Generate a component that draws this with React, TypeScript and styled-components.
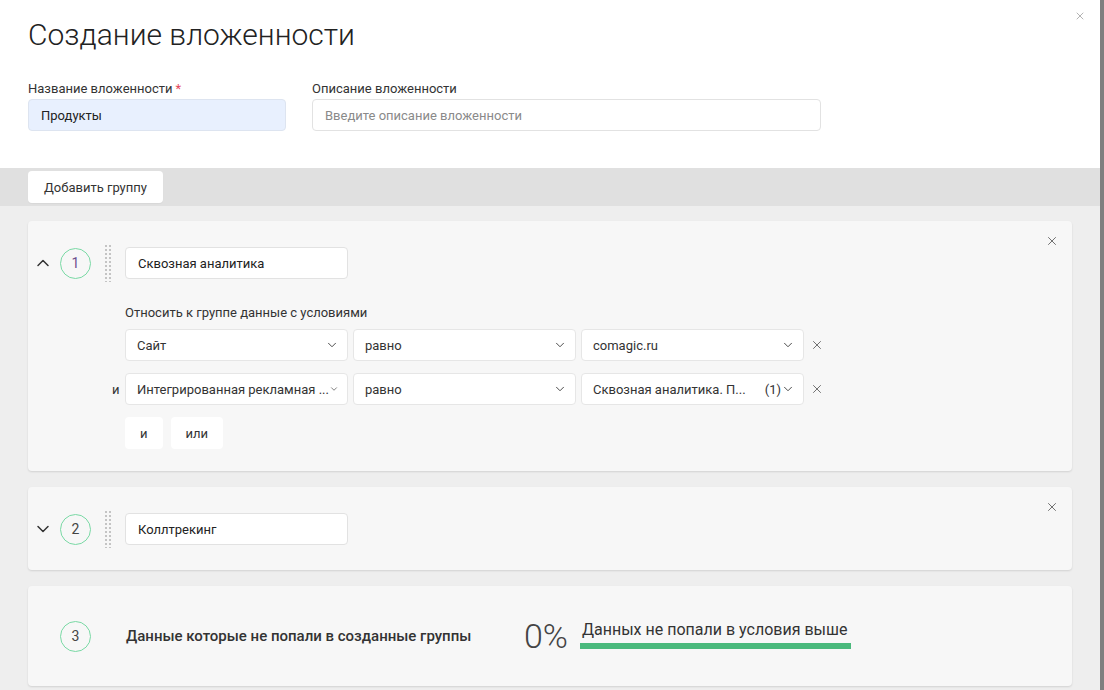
import React from 'react';
import styled, { createGlobalStyle } from 'styled-components';
import { ChevronDown, ChevronUp, X } from 'lucide-react';

const GlobalStyle = createGlobalStyle`
  html, body {
    margin: 0;
    padding: 0;
    background: #7f7f7f;
    font-family: Roboto, "Noto Sans", sans-serif;
    color: #333;
  }
  * { box-sizing: border-box; }
`;

const Modal = styled.div`
  width: 1100px;
  height: 690px;
  background: #eeeeee;
  overflow: hidden;
  display: flex;
  flex-direction: column;
`;

const Header = styled.div`
  position: relative;
  background: #fff;
  padding: 17px 28px 37px;
`;

const Title = styled.h1`
  margin: 0 0 28px;
  font-size: 30px;
  font-weight: 300;
  line-height: 36px;
  color: #222;
`;

const CloseModal = styled.button`
  position: absolute;
  top: 10px;
  right: 14px;
  border: 0;
  background: none;
  padding: 0;
  color: #9a9a9a;
  display: flex;
`;

const Fields = styled.div`
  display: flex;
  gap: 26px;
`;

const Field = styled.label<{ $width: number }>`
  display: flex;
  flex-direction: column;
  width: ${(p) => p.$width}px;
  font-size: 13px;
  color: #333;
  gap: 3px;
`;

const Required = styled.span`
  color: #e4485a;
  margin-left: 3px;
`;

const TextInput = styled.input<{ $filled?: boolean }>`
  height: 32px;
  padding: 0 12px;
  border: 1px solid ${(p) => (p.$filled ? '#dde4f0' : '#e2e2e2')};
  background: ${(p) => (p.$filled ? '#e8f0fe' : '#fff')};
  border-radius: 4px;
  font-family: inherit;
  font-size: 13px;
  color: #222;
  outline: none;
  &::placeholder { color: #8a8a8a; }
`;

const Toolbar = styled.div`
  background: #e0e0e0;
  height: 38px;
  padding: 3px 28px;
`;

const Button = styled.button`
  height: 32px;
  padding: 0 16px;
  border: 0;
  border-radius: 4px;
  background: #fff;
  font-family: inherit;
  font-size: 13px;
  color: #333;
  box-shadow: 0 1px 1px rgba(0, 0, 0, 0.04);
`;

const Content = styled.div`
  padding: 15px 28px;
  display: flex;
  flex-direction: column;
  gap: 16px;
`;

const Card = styled.div<{ $pad: string }>`
  position: relative;
  background: #f7f7f7;
  border-radius: 4px;
  box-shadow: 0 1px 2px rgba(0, 0, 0, 0.12);
  padding: ${(p) => p.$pad};
`;

const CardClose = styled.button`
  position: absolute;
  top: 13px;
  right: 13px;
  border: 0;
  background: none;
  padding: 0;
  color: #666;
  display: flex;
`;

const GroupRow = styled.div`
  display: flex;
  align-items: center;
  height: 38px;
`;

const Toggle = styled.span`
  width: 30px;
  margin-right: 2px;
  display: flex;
  justify-content: center;
  color: #333;
`;

const Num = styled.span<{ $color?: string }>`
  width: 31px;
  height: 31px;
  border-radius: 50%;
  border: 1px solid #7ad9a5;
  display: flex;
  align-items: center;
  justify-content: center;
  font-size: 14px;
  color: ${(p) => p.$color || '#444'};
  flex-shrink: 0;
`;

const Handle = styled.span`
  width: 7px;
  height: 38px;
  margin: 0 14px 0 13px;
  background-image: radial-gradient(circle, #c4c4c4 1px, transparent 1.2px);
  background-size: 4px 4px;
`;

const NameInput = styled(TextInput)`
  width: 223px;
`;

const Conditions = styled.div`
  margin: 23px 0 0 97px;
  display: flex;
  flex-direction: column;
`;

const CondLabel = styled.div`
  font-size: 13px;
  color: #333;
  margin-bottom: 9px;
`;

const CondRow = styled.div`
  position: relative;
  display: flex;
  align-items: center;
  gap: 5px;
  margin-bottom: 12px;
`;

const Conj = styled.span`
  position: absolute;
  left: -13px;
  font-size: 13px;
  color: #333;
`;

const Select = styled.div`
  width: 223px;
  height: 32px;
  background: #fff;
  border: 1px solid #e6e6e6;
  border-radius: 4px;
  display: flex;
  align-items: center;
  padding: 0 8px 0 11px;
  font-size: 13px;
  color: #333;
  white-space: nowrap;
`;

const SelectText = styled.span`
  flex: 1;
`;

const Count = styled.span`
  margin-left: 6px;
`;

const RemoveCond = styled.span`
  display: flex;
  color: #666;
  margin-left: 1px;
`;

const Logic = styled.div`
  display: flex;
  gap: 8px;
`;

const LogicButton = styled(Button)`
  padding: 0 15px;
  box-shadow: none;
`;

const RestRow = styled.div`
  display: flex;
  align-items: center;
  height: 100px;
  padding-left: 32px;
`;

const RestTitle = styled.span`
  margin-left: 35px;
  width: 398px;
  font-size: 15px;
  font-weight: 500;
  color: #333;
`;

const Percent = styled.span`
  font-size: 34px;
  font-weight: 300;
  color: #444;
  margin-right: 12px;
`;

const Meter = styled.div`
  width: 271px;
  display: flex;
  flex-direction: column;
  margin-top: -4px;
`;

const MeterText = styled.span`
  font-size: 16px;
  color: #333;
  padding-left: 2px;
  margin-bottom: 4px;
`;

const MeterBar = styled.div`
  height: 6px;
  background: #4ab97c;
`;

const Chevron = () => <ChevronDown size={14} strokeWidth={1.5} />;

const App = () => (
  <>
    <GlobalStyle />
    <Modal>
      <Header>
        <CloseModal>
          <X size={12} strokeWidth={1.5} />
        </CloseModal>
        <Title>Создание вложенности</Title>
        <Fields>
          <Field $width={258}>
            <span>
              Название вложенности<Required>*</Required>
            </span>
            <TextInput $filled defaultValue="Продукты" />
          </Field>
          <Field $width={509}>
            <span>Описание вложенности</span>
            <TextInput placeholder="Введите описание вложенности" />
          </Field>
        </Fields>
      </Header>
      <Toolbar>
        <Button>Добавить группу</Button>
      </Toolbar>
      <Content>
        <Card $pad="23px 0 22px 0">
          <CardClose>
            <X size={14} strokeWidth={1.6} />
          </CardClose>
          <GroupRow>
            <Toggle>
              <ChevronUp size={20} strokeWidth={1.8} />
            </Toggle>
            <Num $color="#6e4f8e">1</Num>
            <Handle />
            <NameInput defaultValue="Сквозная аналитика" />
          </GroupRow>
          <Conditions>
            <CondLabel>Относить к группе данные с условиями</CondLabel>
            <CondRow>
              <Select>
                <SelectText>Сайт</SelectText>
                <Chevron />
              </Select>
              <Select>
                <SelectText>равно</SelectText>
                <Chevron />
              </Select>
              <Select>
                <SelectText>comagic.ru</SelectText>
                <Chevron />
              </Select>
              <RemoveCond>
                <X size={14} strokeWidth={1.6} />
              </RemoveCond>
            </CondRow>
            <CondRow>
              <Conj>и</Conj>
              <Select>
                <SelectText>Интегрированная рекламная ...</SelectText>
                <Chevron />
              </Select>
              <Select>
                <SelectText>равно</SelectText>
                <Chevron />
              </Select>
              <Select>
                <SelectText>Сквозная аналитика. П...</SelectText>
                <Count>(1)</Count>
                <Chevron />
              </Select>
              <RemoveCond>
                <X size={14} strokeWidth={1.6} />
              </RemoveCond>
            </CondRow>
            <Logic>
              <LogicButton>и</LogicButton>
              <LogicButton>или</LogicButton>
            </Logic>
          </Conditions>
        </Card>
        <Card $pad="23px 0 22px 0">
          <CardClose>
            <X size={14} strokeWidth={1.6} />
          </CardClose>
          <GroupRow>
            <Toggle>
              <ChevronDown size={20} strokeWidth={1.8} />
            </Toggle>
            <Num>2</Num>
            <Handle />
            <NameInput defaultValue="Коллтрекинг" />
          </GroupRow>
        </Card>
        <Card $pad="0">
          <RestRow>
            <Num>3</Num>
            <RestTitle>Данные которые не попали в созданные группы</RestTitle>
            <Percent>0%</Percent>
            <Meter>
              <MeterText>Данных не попали в условия выше</MeterText>
              <MeterBar />
            </Meter>
          </RestRow>
        </Card>
      </Content>
    </Modal>
  </>
);

export default App;
